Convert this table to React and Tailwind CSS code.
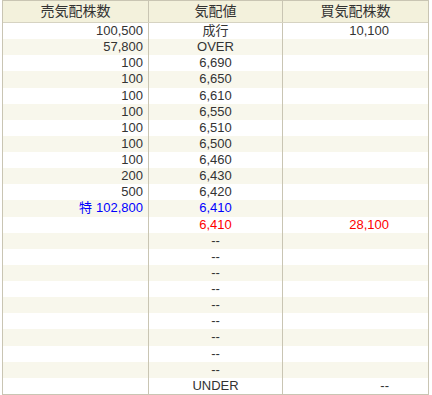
import React from "react";

const rows = [
  { sell: "100,500", price: "成行", buy: "10,100" },
  { sell: "57,800", price: "OVER", buy: "" },
  { sell: "100", price: "6,690", buy: "" },
  { sell: "100", price: "6,650", buy: "" },
  { sell: "100", price: "6,610", buy: "" },
  { sell: "100", price: "6,550", buy: "" },
  { sell: "100", price: "6,510", buy: "" },
  { sell: "100", price: "6,500", buy: "" },
  { sell: "100", price: "6,460", buy: "" },
  { sell: "200", price: "6,430", buy: "" },
  { sell: "500", price: "6,420", buy: "" },
  { sell: "102,800", special: true, price: "6,410", buy: "", tone: "blue" },
  { sell: "", price: "6,410", buy: "28,100", tone: "red" },
  ...Array.from({ length: 9 }, () => ({ sell: "", price: "--", buy: "" })),
  { sell: "", price: "UNDER", buy: "--" },
];

const toneClass = (tone) => {
  if (tone === "blue") return "text-[#0000ff]";
  if (tone === "red") return "text-[#ff0000]";
  return "text-[#333333]";
};

const App = () => {
  return (
    <div
      className="bg-white w-[432px] h-[395px]"
      style={{ fontFamily: '"Liberation Sans", Arial, "Noto Sans CJK JP", sans-serif' }}
    >
      <div className="ml-[2px] w-[427px] border border-[#c9c5b3]">
        <div className="grid grid-cols-[146px_134px_1fr] h-[22px] bg-[#f3f1dc] border-b border-[#d6d3c2] text-[14px] text-[#333333]">
          <div className="flex items-center justify-center border-r border-[#c9c5b3]">売気配株数</div>
          <div className="flex items-center justify-center border-r border-[#c9c5b3]">気配値</div>
          <div className="flex items-center justify-center">買気配株数</div>
        </div>
        {rows.map((r, i) => (
          <div
            key={i}
            className={`grid grid-cols-[146px_134px_1fr] h-[16.14px] text-[13px] leading-[16px] ${i % 2 === 1 ? "bg-[#f8f7ec]" : "bg-white"} ${toneClass(r.tone)}`}
          >
            <div className="text-right pr-[5px] border-r border-[#c9c5b3]">
              {r.special && <span className="mr-[4px]">特</span>}
              {r.sell}
            </div>
            <div className="text-center border-r border-[#c9c5b3]">{r.price}</div>
            <div className="text-right pr-[39px]">{r.buy}</div>
          </div>
        ))}
      </div>
    </div>
  );
};

export default App;
